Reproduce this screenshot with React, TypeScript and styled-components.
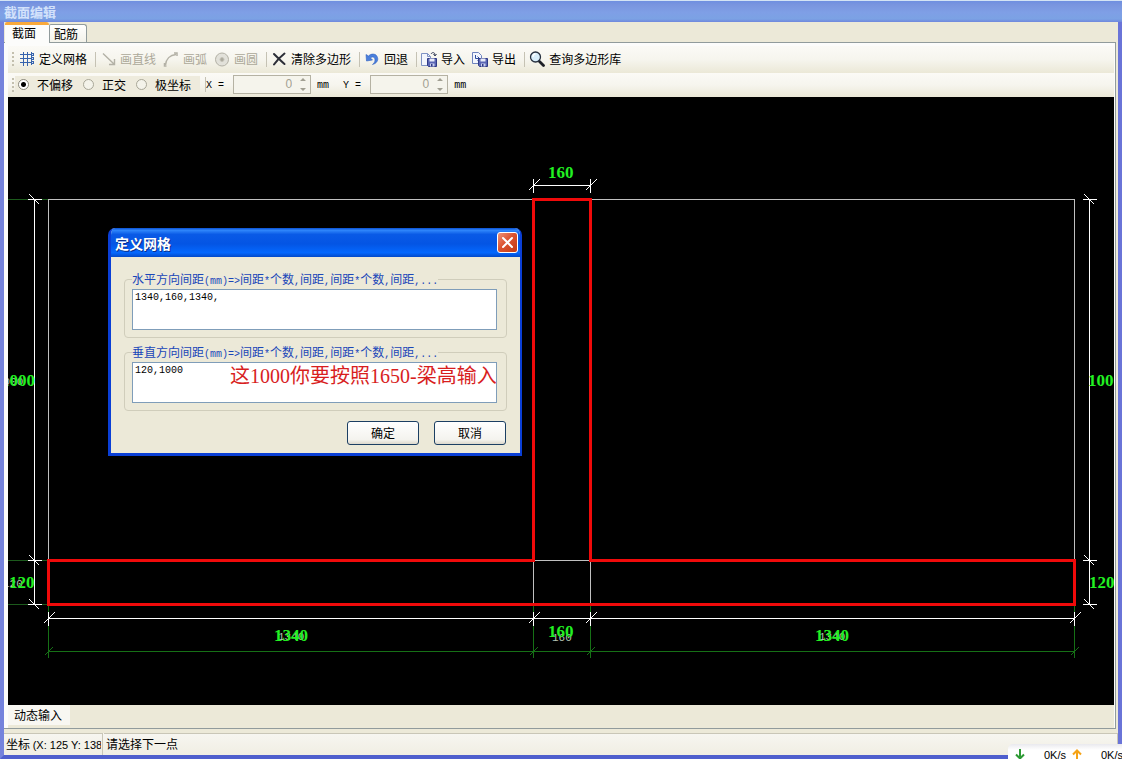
import React from "react";
import styled, { createGlobalStyle } from "styled-components";

const cjk = `"Noto Sans CJK SC", sans-serif`;

const GlobalStyle = createGlobalStyle`
  * { box-sizing: border-box; }
  body {
    margin: 0;
    background: #ece9d8;
    color: #000;
    font: 12px/16px ${cjk};
  }
  button, input, textarea { font: inherit; color: inherit; margin: 0; }
`;

/* ---------- window frame ---------- */

const Frame = styled.div`
  position: relative;
  height: 100vh;
  min-height: 480px;
  display: flex;
  flex-direction: column;
  overflow: hidden;
  background: #ece9d8;
`;

const TitleBar = styled.header`
  flex: none;
  height: 22px;
  padding: 3px 4px 0;
  border-top: 1px solid #d4e4f4;
  background: linear-gradient(#6f8fe0, #7a96df 20%, #7f9fe6 55%, #7ba2e4 85%, #7088dd);
`;

const Title = styled.h1`
  margin: 0;
  color: #d3e2fb;
  font-size: 13px;
  line-height: 16px;
`;

const Body = styled.div`
  flex: 1;
  min-height: 0;
  display: flex;
  flex-direction: column;
  border: 4px solid #7583dc;
  border-top: 0;
  border-right-color: #6a74d8;
  border-bottom-color: #4f5fcd;
`;

const Tabs = styled.div`
  flex: none;
  height: 20px;
  padding-left: 1px;
  display: flex;
  align-items: flex-end;
`;

const Tab = styled.button<{ $active?: boolean }>`
  position: relative;
  height: ${(p) => (p.$active ? 21 : 18)}px;
  margin-bottom: ${(p) => (p.$active ? -1 : 0)}px;
  padding: ${(p) => (p.$active ? "0 13px 3px 7px" : "0 8px 0 4px")};
  border: 1px solid #919b9c;
  border-width: ${(p) => (p.$active ? "3px 0 0" : "1px 1px 0")};
  border-top-color: ${(p) => (p.$active ? "#f9a93c" : "#919b9c")};
  border-radius: 2px 3px 0 0;
  background: ${(p) => (p.$active ? "#fcfcfb" : "linear-gradient(#fff, #f3f2ea)")};
  line-height: 16px;
`;

const Page = styled.main`
  flex: 1;
  min-height: 0;
  margin-right: 2px;
  padding: 3px 1px 0 4px;
  display: flex;
  flex-direction: column;
  border: 1px solid #919b9c;
  border-left: 0;
  background: #fcfcfb;
`;

/* ---------- toolbars ---------- */

const Toolbar = styled.div<{ $height: number }>`
  flex: none;
  height: ${(p) => p.$height}px;
  padding: 0 0 1px 4px;
  display: flex;
  align-items: center;
  background: linear-gradient(#fbfaf6, #f6f5ee 50%, #ebe8d7);
  white-space: nowrap;
`;

const Grip = styled.span`
  flex: none;
  width: 2px;
  height: 14px;
  margin-right: 1px;
  background: repeating-linear-gradient(#c3bfae 0 2px, transparent 2px 4px);
`;

const Separator = styled.span`
  flex: none;
  width: 1px;
  height: 15px;
  margin-left: 5px;
  background: #c5c2b4;
`;

const ToolButton = styled.button`
  display: flex;
  align-items: center;
  gap: 4px;
  height: 22px;
  padding: 0 3px 0 4px;
  border: 0;
  background: none;
  &:disabled { color: #aca899; }
  svg { display: block; flex: none; }
`;

const RadioGroup = styled.div`
  display: flex;
  align-items: center;
  gap: 10px;
  height: 18px;
  padding: 0 9px 0 3px;
  background: #eeebdd;
`;

const RadioLabel = styled.label`
  display: flex;
  align-items: center;
  gap: 8px;
`;

const Radio = styled.input`
  appearance: none;
  width: 11px;
  height: 11px;
  border: 1px solid #a9a798;
  border-radius: 50%;
  background: #f4f3ea;
  &:checked {
    border-color: #8b897d;
    background: radial-gradient(circle, #000 0 2px, #fff 3px);
  }
`;

const Half = styled.span`
  font: 10px/16px "Liberation Mono", monospace;
  white-space: pre;
`;

const FieldName = styled.label`
  margin-right: 9px;
  line-height: 16px;
`;

const Unit = styled.span`
  margin: 0 14px 0 6px;
  line-height: 16px;
`;

const Spin = styled.span`
  flex: none;
  width: 78px;
  height: 19px;
  padding-right: 3px;
  display: flex;
  align-items: center;
  border: 1px solid #b5b2a3;
  background: #f5f4ec;
`;

const SpinInput = styled.input`
  flex: 1;
  min-width: 0;
  padding: 0 8px 2px 0;
  border: 0;
  background: none;
  color: #a3a193;
  font: 12px/14px "Liberation Sans", sans-serif;
  text-align: right;
`;

/* ---------- drawing area ---------- */

const Canvas = styled.section`
  position: relative;
  flex: 1;
  min-height: 0;
  display: flex;
  overflow: hidden;
  background: #000;
`;

const Drawing = styled.svg`
  flex: 1;
  width: 100%;
  height: 100%;
  fill: none;
`;

const BottomTabs = styled.div`
  flex: none;
  height: 23px;
  display: flex;
  background: #ece9d8;
`;

const BottomTab = styled.button`
  height: 20px;
  padding: 0 8px 0 6px;
  border: 0;
  background: #f8f7f2;
`;

const StatusBar = styled.footer`
  flex: none;
  height: 22px;
  margin-top: 4px;
  display: flex;
  gap: 1px;
  background: linear-gradient(#f7f6f1, #f0eee3);
  line-height: 20px;
  white-space: nowrap;
`;

const StatusPane = styled.div<{ $width?: number }>`
  flex: ${(p) => (p.$width ? `0 0 ${p.$width}px` : "1")};
  padding-left: 2px;
  border: 1px solid #c9c6b7;
  border-width: 1px 1px 0 0;
  overflow: hidden;
`;

const StatusClip = styled.div`
  margin-right: 1px;
  overflow: hidden;
`;

const Coordinates = styled.span`
  font: 11px/20px "Liberation Sans", sans-serif;
`;

/* ---------- dialog ---------- */

const Dialog = styled.section`
  position: absolute;
  left: 100px;
  top: 131px;
  width: 414px;
  border: 3px solid #0a3fd6;
  border-width: 0 2px 3px 3px;
  border-radius: 7px 7px 0 0;
  background: #ece9d8;
  overflow: hidden;
`;

const DialogTitle = styled.div`
  height: 29px;
  margin: 0 -2px 0 -3px;
  padding: 0 4px 0 7px;
  display: flex;
  align-items: center;
  justify-content: space-between;
  background: linear-gradient(#0a4fd0, #2f86fb 8%, #0a5ae6 22%, #0455e4 55%, #0468fe 85%, #0349c8);
`;

const DialogName = styled.h2`
  margin: 0;
  color: #fff;
  font-size: 14px;
  line-height: 18px;
  text-shadow: 1px 1px #0a2f8c;
`;

const CloseButton = styled.button`
  width: 21px;
  height: 21px;
  padding: 0;
  border: 1px solid #fff;
  border-radius: 3px;
  background: linear-gradient(135deg, #ee9379, #dc5330 45%, #c33c15);
  svg { display: block; margin: auto; }
`;

const DialogBody = styled.form`
  padding: 15px 13px 8px;
`;

const Group = styled.fieldset`
  min-width: 0;
  margin: 0 0 7px;
  padding: 3px 9px 7px 7px;
  border: 1px solid #d0cdbb;
  border-radius: 4px;
`;

const Legend = styled.legend`
  height: 14px;
  padding: 0;
  color: #1a46b8;
  line-height: 14px;
  white-space: nowrap;
  ${Half} { line-height: 14px; }
`;

const AreaWrap = styled.div`
  position: relative;
`;

const Area = styled.textarea`
  display: block;
  width: 100%;
  height: 41px;
  padding: 0 2px;
  border: 1px solid #7f9db9;
  border-radius: 0;
  background: #fff;
  font: 10px/16px "Liberation Mono", monospace;
  resize: none;
  overflow: hidden;
`;

const Note = styled.span`
  position: absolute;
  left: 98px;
  top: 2px;
  color: #d81e1e;
  font: 20px/24px "Liberation Serif", ${cjk};
  white-space: nowrap;
  pointer-events: none;
`;

const Actions = styled.div`
  display: flex;
  justify-content: flex-end;
  gap: 15px;
  padding: 3px 1px 0 0;
`;

const PushButton = styled.button`
  width: 72px;
  height: 24px;
  padding: 0;
  border: 1px solid #1c3f63;
  border-radius: 3px;
  background: linear-gradient(#fff, #f4f3ee 80%, #dcd8cc);
`;

/* ---------- network speed widget ---------- */

const SpeedWidget = styled.aside`
  position: absolute;
  right: 0;
  bottom: 0;
  width: 114px;
  height: 15px;
  padding: 4px 0 0 6px;
  display: flex;
  border-radius: 5px 0 0 0;
  background: linear-gradient(#e9e9ee, #fff 40%);
  overflow: hidden;
  font: 11px/14px "Liberation Sans", sans-serif;
  white-space: nowrap;
  svg { flex: none; margin-top: 1px; }
`;

const Speed = styled.span`
  flex: none;
  width: 27px;
  margin-left: 18px;
`;

/* Latin runs are set in half-width characters next to full-width Chinese ones. */
function Mixed({ text }: { text: string }) {
  return (
    <>
      {text.split(/([\x20-\x7e]+)/).map((run, i) => (i % 2 ? <Half key={i}>{run}</Half> : run))}
    </>
  );
}

const icon = { width: 16, height: 16, viewBox: "0 0 16 16", fill: "none", "aria-hidden": true } as const;

const GridIcon = () => (
  <svg {...icon} stroke="#3763ad" shapeRendering="crispEdges">
    <path d="M4.500 1v14M8.500 1v14M12.500 1v13M1 3.500h13M1 7.500h13M1 11.500h13" />
    <path d="M12.500 2.500h2v2h-2zM12.500 6.500h2v2h-2zM12.500 10.500h2v2h-2z" fill="#dfe8f6" />
  </svg>
);

const LineIcon = () => (
  <svg {...icon} stroke="#b3b1a6" strokeWidth="1.400">
    <path d="M3 2.500 14 13M14.500 8v5.500H9" />
  </svg>
);

const ArcIcon = () => (
  <svg {...icon} stroke="#b3b1a6" strokeWidth="1.500">
    <path d="M2.500 14C3 8 7 4 13 3.500M1.500 12v3h2M11 2h3v3" />
  </svg>
);

const CircleIcon = () => (
  <svg {...icon} stroke="#b3b1a6">
    <circle cx="8" cy="8.500" r="6.500" fill="#e2e1da" />
    <circle cx="8" cy="8.500" r="2" fill="#aaa89d" stroke="#c5c3b9" />
  </svg>
);

const CrossIcon = () => (
  <svg {...icon} stroke="#2c2e38" strokeWidth="2" strokeLinecap="round">
    <path d="M3 3c3 3 7 7 10.500 10M13.500 2.500C9 6 6 9 3 13.500" />
  </svg>
);

const UndoIcon = () => (
  <svg {...icon}>
    <path
      d="M2 3.500 2.500 10l6-1-2-2c2-2 4.500-1 4.500 2 0 2-1 3-2.500 4.500 4-1 6-4 5-7C12.500 2.500 7.500 2 4.500 5z"
      fill="#4a7fdc"
      stroke="#2f5fc0"
      strokeWidth=".6"
    />
  </svg>
);

const Floppy = () => (
  <>
    <path d="M6.500 7.500h9v8h-8l-1-1z" fill="#5a66b4" stroke="#2f3a86" />
    <path d="M8.500 7.500h5v3h-5z" fill="#e8ecfa" />
    <path d="M9 12.500h4.500v3H9z" fill="#c9cfee" />
    <path d="M10 13h1.500v2.500H10z" fill="#2f3a86" />
  </>
);

const ImportIcon = () => (
  <svg {...icon}>
    <path d="M.5 2.500h6l3 3v9h-9z" fill="#f3f6fd" stroke="#7f93c4" />
    <path d="M6.500 2.500v3h3" stroke="#7f93c4" />
    <Floppy />
    <path d="M10 3c1-2 4-2 4 1M12.500 3l1.500 2 1.500-2" stroke="#333b55" />
  </svg>
);

const ExportIcon = () => (
  <svg {...icon}>
    <path d="M.5 1.500h6l3 3v8h-9z" fill="#f3f6fd" stroke="#6f84be" />
    <path d="M3.500 4v3.500H7M5.500 5.500l2 2-2 2" stroke="#2d4e9e" />
    <Floppy />
  </svg>
);

const SearchIcon = () => (
  <svg {...icon}>
    <path d="m10.500 10.500 4 4" stroke="#1d1f26" strokeWidth="2.800" strokeLinecap="round" />
    <circle cx="6.500" cy="6" r="5" fill="#d8eefb" stroke="#27303f" strokeWidth="1.300" />
    <path d="M4 6c0-2 1-3 2.500-3" stroke="#fff" strokeWidth="1.300" />
  </svg>
);

const SpinArrows = () => (
  <svg width="7" height="15" viewBox="0 0 7 15" fill="#a19f92" aria-hidden="true">
    <path d="M0 4h6L3 1zM0 11h6l-3 3z" />
  </svg>
);

const SpeedArrow = ({ up }: { up?: boolean }) => (
  <svg width="12" height="11" viewBox="0 0 12 11" fill="none" stroke={up ? "#f5a316" : "#2d9a34"} strokeWidth="2" aria-hidden="true">
    <path d={up ? "M6 11V2M2 5.500 6 1.500l4 4" : "M6 0v9M2 5.500l4 4 4-4"} />
  </svg>
);

function AxisField({ axis }: { axis: string }) {
  const id = `offset-${axis}`;
  return (
    <>
      <FieldName htmlFor={id}><Half>{axis} =</Half></FieldName>
      <Spin>
        <SpinInput id={id} type="text" inputMode="numeric" defaultValue="0" disabled />
        <SpinArrows />
      </Spin>
      <Unit><Half>mm</Half></Unit>
    </>
  );
}

/* ---------- section drawing ---------- */

const columns = [48.5, 533.5, 590.5, 1074.5];
const levels = [199.5, 560.5, 604.5];

const tickAcross = (x: number, y: number) => `M${x} ${y - 7}v14M${x - 5} ${y + 5}l11 -11`;
const tickDown = (x: number, y: number) => `M${x - 7} ${y}h14M${x - 5} ${y - 5}l10 10`;

function SectionDrawing() {
  return (
    <Drawing viewBox="8 97 1106 608" preserveAspectRatio="xMidYMid meet" role="img" aria-label="截面">
      <g shapeRendering="crispEdges">
        <path stroke="#1c5a1c" d="M8 199.5H48M8 560.5H48M8 604.5H48" />
        <path stroke="#167016" d={`M48 651.5H1075${columns.map((x) => `M${x} 606V658M${x - 4} 655.5l8 -8`).join("")}`} />
        <path stroke="#c0c0c0" d="M48.5 560V199.5H1074.5V560M533 560.5H591M533.5 560V604M590.5 560V604" />
        <path stroke="#fff" d={`M48 618.5H1075${columns.map((x) => tickAcross(x, 618.5)).join("")}`} />
        <path stroke="#fff" d={`M533 185.5H591${tickAcross(533.5, 185.5)}${tickAcross(590.5, 185.5)}`} />
        {[34.5, 1089.5].map((x) => (
          <path key={x} stroke="#fff" d={`M${x} 199V605${levels.map((y) => tickDown(x, y)).join("")}`} />
        ))}
        <path stroke="#f00a0a" strokeWidth="3" d="M533.5 199.5H590.5V560.5H1074.5V604.5H48.5V560.5H533.5Z" />
      </g>
      <g fill="#b4c4b4" fontSize="11" fontFamily="Liberation Mono, monospace">
        <text x="-3" y="385">1000</text>
        <text x="3" y="587">120</text>
        <text x="278" y="640">1340</text>
        <text x="552" y="641">160</text>
        <text x="819" y="640">1340</text>
      </g>
      <g fill="#22f022" fontSize="17" fontWeight="700" fontFamily="Liberation Serif, serif">
        <text x="548" y="178">160</text>
        <text x="1" y="386">1000</text>
        <text x="9" y="588">120</text>
        <text x="1088" y="386">1000</text>
        <text x="1089" y="588">120</text>
        <text x="274" y="641">1340</text>
        <text x="548" y="637">160</text>
        <text x="815" y="641">1340</text>
      </g>
    </Drawing>
  );
}

function GridDialog() {
  return (
    <Dialog role="dialog" aria-labelledby="grid-title">
      <DialogTitle>
        <DialogName id="grid-title">定义网格</DialogName>
        <CloseButton type="button" aria-label="关闭">
          <svg width="13" height="13" viewBox="0 0 13 13" stroke="#fff" strokeWidth="2" strokeLinecap="round">
            <path d="m2 2 9 9M11 2l-9 9" />
          </svg>
        </CloseButton>
      </DialogTitle>
      <DialogBody>
        <Group>
          <Legend id="h-legend"><Mixed text="水平方向间距(mm)=>间距*个数,间距,间距*个数,间距,..." /></Legend>
          <Area aria-labelledby="h-legend" defaultValue="1340,160,1340," spellCheck={false} />
        </Group>
        <Group>
          <Legend id="v-legend"><Mixed text="垂直方向间距(mm)=>间距*个数,间距,间距*个数,间距,..." /></Legend>
          <AreaWrap>
            <Area aria-labelledby="v-legend" defaultValue="120,1000" spellCheck={false} />
            <Note>这1000你要按照1650-梁高输入</Note>
          </AreaWrap>
        </Group>
        <Actions>
          <PushButton type="button">确定</PushButton>
          <PushButton type="button">取消</PushButton>
        </Actions>
      </DialogBody>
    </Dialog>
  );
}

export default function App() {
  return (
    <Frame>
      <GlobalStyle />
      <TitleBar><Title>截面编辑</Title></TitleBar>
      <Body>
        <Tabs>
          <Tab type="button" $active>截面</Tab>
          <Tab type="button">配筋</Tab>
        </Tabs>
        <Page>
          <Toolbar $height={27}>
            <Grip />
            <ToolButton type="button"><GridIcon />定义网格</ToolButton>
            <Separator />
            <ToolButton type="button" disabled><LineIcon />画直线</ToolButton>
            <ToolButton type="button" disabled><ArcIcon />画弧</ToolButton>
            <ToolButton type="button" disabled><CircleIcon />画圆</ToolButton>
            <Separator />
            <ToolButton type="button"><CrossIcon />清除多边形</ToolButton>
            <Separator />
            <ToolButton type="button"><UndoIcon />回退</ToolButton>
            <Separator />
            <ToolButton type="button"><ImportIcon />导入</ToolButton>
            <ToolButton type="button"><ExportIcon />导出</ToolButton>
            <Separator />
            <ToolButton type="button"><SearchIcon />查询多边形库</ToolButton>
          </Toolbar>
          <Toolbar $height={24}>
            <Grip />
            <RadioGroup role="radiogroup" aria-label="坐标">
              <RadioLabel><Radio type="radio" name="mode" defaultChecked />不偏移</RadioLabel>
              <RadioLabel><Radio type="radio" name="mode" />正交</RadioLabel>
              <RadioLabel><Radio type="radio" name="mode" />极坐标</RadioLabel>
            </RadioGroup>
            <Separator />
            <AxisField axis="X" />
            <AxisField axis="Y" />
          </Toolbar>
          <Canvas>
            <SectionDrawing />
            <GridDialog />
          </Canvas>
          <BottomTabs><BottomTab type="button">动态输入</BottomTab></BottomTabs>
        </Page>
        <StatusBar>
          <StatusPane $width={99}><StatusClip>坐标 <Coordinates>(X: 125 Y: 138</Coordinates></StatusClip></StatusPane>
          <StatusPane>请选择下一点</StatusPane>
        </StatusBar>
      </Body>
      <SpeedWidget>
        <SpeedArrow />
        <Speed>0K/s</Speed>
        <SpeedArrow up />
        <Speed>0K/s</Speed>
      </SpeedWidget>
    </Frame>
  );
}
